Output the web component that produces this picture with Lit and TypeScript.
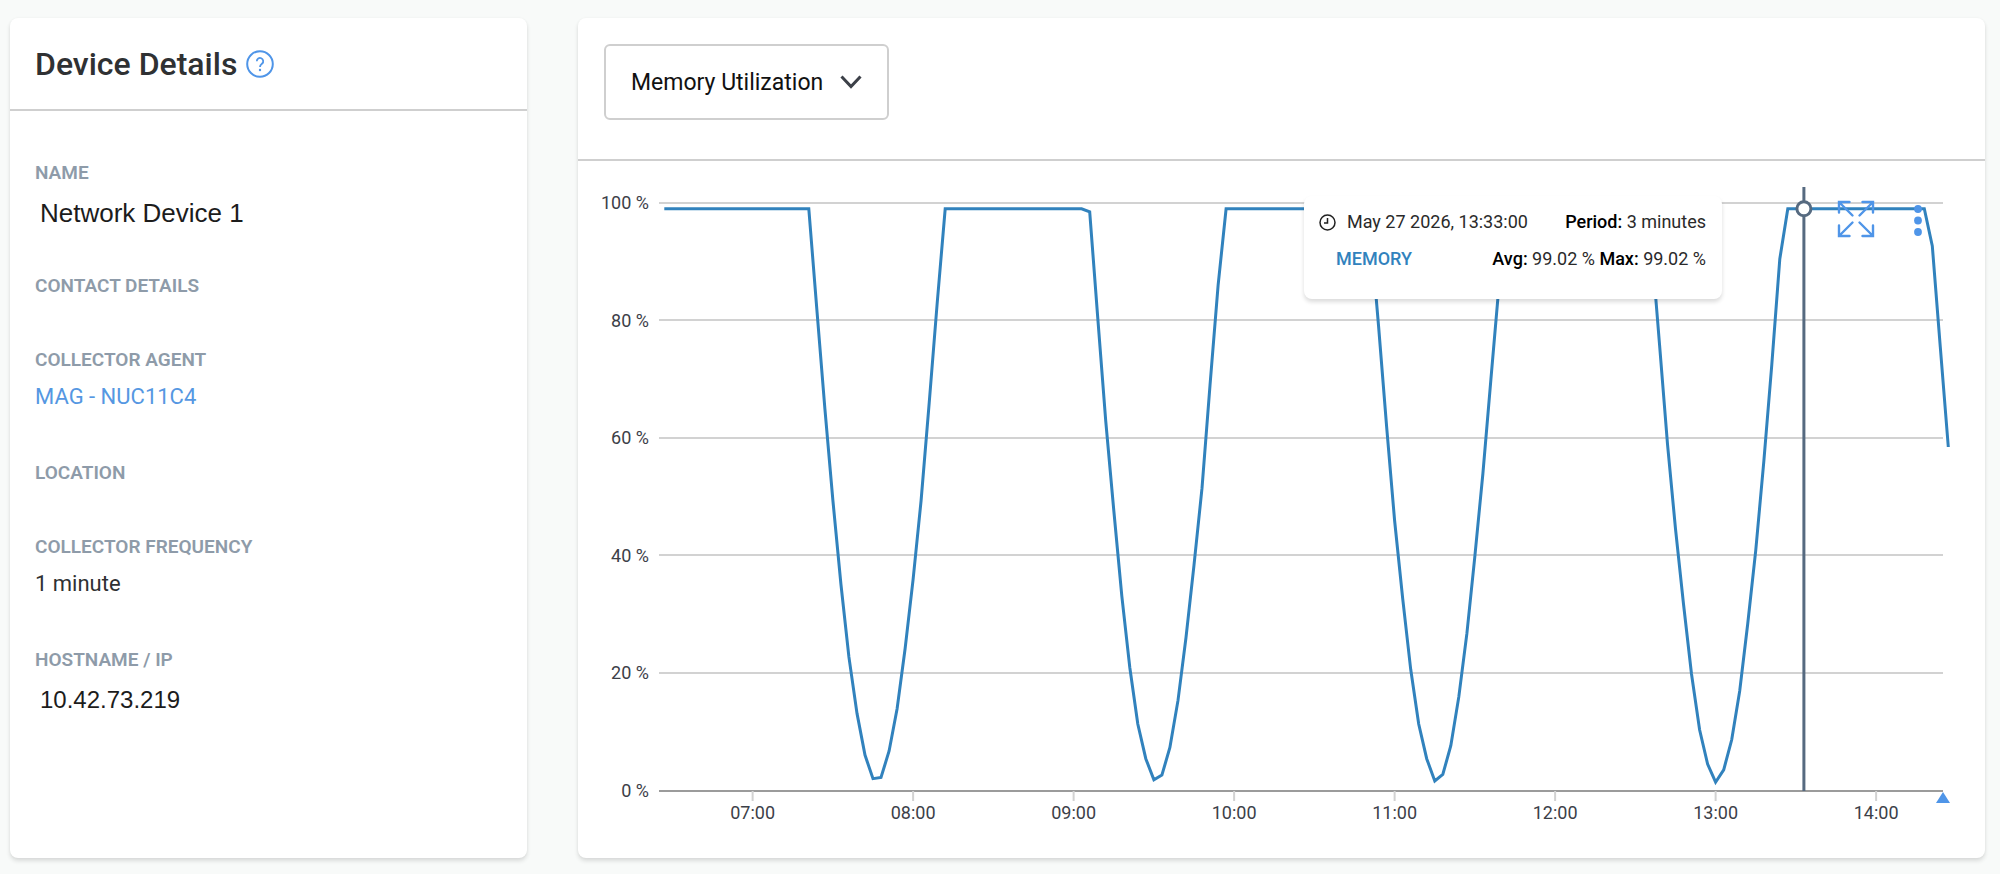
import { LitElement, html, css, svg, nothing } from "lit";
import { customElement, property, state } from "lit/decorators.js";

interface Field {
  label: string;
  value?: string;
  kind?: "text" | "link" | "name" | "address";
}

const FIELDS: Field[] = [
  { label: "NAME", value: "Network Device 1", kind: "name" },
  { label: "CONTACT DETAILS" },
  { label: "COLLECTOR AGENT", value: "MAG - NUC11C4", kind: "link" },
  { label: "LOCATION" },
  { label: "COLLECTOR FREQUENCY", value: "1 minute", kind: "text" },
  { label: "HOSTNAME / IP", value: "10.42.73.219", kind: "address" },
];

const FULL = 99.02;

/* Minutes since midnight paired with memory use in percent. */
const run = (from: number, values: number[]): [number, number][] =>
  values.map((v, i) => [from + i * 3, v]);

const SERIES: [number, number][] = [
  [387, FULL],
  ...run(441, [FULL, 82, 65, 49.4, 35.2, 22.8, 13.2, 6.1, 2.1, 2.3, 6.8, 14, 24.2, 36, 49.4, 66, 83, FULL]),
  ...run(543, [FULL, 98.5, 80.6, 63, 47.7, 33.2, 21, 11.4, 5.5, 1.9, 2.7, 7.4, 15.4, 26.1, 38.4, 51.5, 69, 86, FULL]),
  ...run(648, [FULL, 95, 79, 62, 46, 32.7, 20.7, 11.4, 5.5, 1.7, 2.8, 7.7, 16, 26.8, 40, 54, 70, 86, FULL]),
  ...run(753, [FULL, 93, 76, 59, 44.6, 31.8, 19.9, 10.4, 4.6, 1.5, 3.6, 8.7, 17, 28.4, 41, 56, 72.5, 90.5, FULL]),
  ...run(858, [FULL, 92.7, 75.5, 58.5]),
];

const START = 385;
const END = 865;
const HOVER = 813;
const PAD = { left: 81, right: 42, top: 42, bottom: 66 };
const HEIGHT = 696;

@customElement("usage-chart")
export class UsageChart extends LitElement {
  @property({ attribute: false }) series: [number, number][] = [];
  @state() private width = 1407;
  private observer?: ResizeObserver;

  static styles = css`
    :host { display: block; position: relative; min-width: 0; }
    svg { display: block; }
    .plot { width: 100%; height: 696px; }
    .plot text { font-size: 18px; fill: #3c4048; }
    .grid { stroke: #d2d2d2; stroke-width: 2; }
    .axis { stroke: #9b9b9b; stroke-width: 2; }
    .line { fill: none; stroke: #3182bd; stroke-width: 3; }
    .cursor { stroke: #566a80; stroke-width: 3; }
    .dot { fill: #fff; stroke: #566a80; stroke-width: 3; }
    .now { fill: #4f95e8; }
    .tools { position: absolute; top: 39px; right: 63px; display: flex; gap: 39px; }
    button { border: 0; padding: 0; background: none; cursor: pointer; }
    .tip {
      position: absolute; top: 35px; width: 418px; height: 103px; box-sizing: border-box;
      padding: 14px 16px 0 15px; background: #fff; border-radius: 8px;
      box-shadow: 0 3px 4px rgba(0, 0, 0, 0.14); font-size: 18px; color: #2a2a2a;
      display: flex; flex-direction: column; gap: 13px; white-space: nowrap;
    }
    .row { display: flex; align-items: center; line-height: 24px; }
    .row .end { margin-left: auto; }
    .clock { margin-right: 11px; }
    .metric { margin-left: 17px; color: #3182bd; font-weight: 500; }
    b { font-weight: 500; color: #000; }
  `;

  connectedCallback() {
    super.connectedCallback();
    this.observer = new ResizeObserver(([e]) => {
      this.width = Math.round(e.contentRect.width);
    });
    this.observer.observe(this);
  }

  disconnectedCallback() {
    this.observer?.disconnect();
    super.disconnectedCallback();
  }

  private x(m: number) {
    const span = this.width - PAD.left - PAD.right;
    return PAD.left + ((m - START) / (END - START)) * span;
  }

  private y(v: number) {
    return HEIGHT - PAD.bottom - (v / 100) * (HEIGHT - PAD.top - PAD.bottom);
  }

  render() {
    const right = this.width - PAD.right;
    const base = this.y(0);
    const cursor = this.x(HOVER);
    return html`
      <svg class="plot" role="img" aria-label="Memory utilization over time">
        ${[100, 80, 60, 40, 20, 0].map(
          (v) => svg`
            <line class=${v ? "grid" : "axis"} x1=${PAD.left} x2=${right} y1=${Math.floor(this.y(v))} y2=${Math.floor(this.y(v))}></line>
            <text x=${PAD.left - 10} y=${this.y(v) + 6} text-anchor="end">${v} %</text>`
        )}
        ${[7, 8, 9, 10, 11, 12, 13, 14].map(
          (h) => svg`
            <line class="grid" x1=${this.x(h * 60)} x2=${this.x(h * 60)} y1=${base} y2=${base + 10}></line>
            <text x=${this.x(h * 60)} y=${base + 28} text-anchor="middle">${String(h).padStart(2, "0")}:00</text>`
        )}
        <path class="now" d=${`M${right} ${base + 1}l7 11h-14z`}></path>
        <polyline class="line" points=${this.series.map(([m, v]) => `${this.x(m).toFixed(1)},${this.y(v).toFixed(1)}`).join(" ")}></polyline>
        <line class="cursor" x1=${cursor} x2=${cursor} y1="26" y2=${base}></line>
        <circle class="dot" cx=${cursor} cy=${this.y(FULL)} r="7"></circle>
      </svg>
      <div class="tools">
        <button aria-label="Expand chart">
          <svg width="38" height="38" viewBox="0 0 38 38" fill="none" stroke="#4f95e8" stroke-width="2.4" stroke-linecap="round">
            <path d="M2 12.500V2H12.500M2 2L15.500 15.500M25.500 2H36V12.500M36 2L22.500 15.500M2 25.500V36H12.500M2 36L15.500 22.500M25.500 36H36V25.500M36 36L22.500 22.500"></path>
          </svg>
        </button>
        <button aria-label="Chart menu">
          <svg width="8" height="38" viewBox="0 0 8 38" fill="#4f95e8">
            <circle cx="4" cy="9" r="3.900"></circle><circle cx="4" cy="20.500" r="3.900"></circle><circle cx="4" cy="32" r="3.900"></circle>
          </svg>
        </button>
      </div>
      <div class="tip" style=${`left:${Math.round(cursor) - 500}px`}>
        <div class="row">
          <svg class="clock" width="17" height="17" viewBox="0 0 17 17" fill="none" stroke="#222" stroke-width="1.5">
            <circle cx="8.5" cy="8.5" r="7.5"></circle><path d="M8.5 4v5H5"></path>
          </svg>
          <span>May 27 2026, 13:33:00</span>
          <span class="end"><b>Period:</b> 3 minutes</span>
        </div>
        <div class="row">
          <span class="metric">MEMORY</span>
          <span class="end"><b>Avg:</b> 99.02 % <b>Max:</b> 99.02 %</span>
        </div>
      </div>
    `;
  }
}

@customElement("app-root")
export class AppRoot extends LitElement {
  static styles = css`
    :host {
      display: grid; grid-template-columns: 517px minmax(0, 1fr); gap: 51px;
      box-sizing: border-box; min-height: 100vh; padding: 18px 15px 16px 10px;
      background: #f8faf9; font-family: Roboto, sans-serif; color: #2f3133;
    }
    .card {
      background: #fff; border-radius: 8px; min-width: 0;
      box-shadow: 0 3px 4px rgba(0, 0, 0, 0.12), 0 0 3px rgba(0, 0, 0, 0.04);
    }
    header { display: flex; align-items: center; box-sizing: border-box; padding: 0 25px; border-bottom: 2px solid #cfcfcf; }
    .title { height: 93px; gap: 9px; }
    h1 { margin: 0; font-size: 32px; font-weight: 500; line-height: 40px; }
    button { display: flex; border: 0; padding: 0; background: none; cursor: pointer; }
    dl { margin: 0; padding: 50px 25px; display: flex; flex-direction: column; gap: 50px; }
    dt { font-size: 19px; line-height: 24px; font-weight: 600; color: #8e9ba9; }
    dd { margin: 11px 0 0; font-size: 22px; line-height: 28px; }
    .name, .address { margin: 17px 0 0 5px; line-height: 22px; font-family: "Liberation Sans", Arial, sans-serif; color: #1c1c1c; }
    .name { font-size: 26px; }
    .address { font-size: 24px; }
    a { color: #5597e2; text-decoration: none; }
    .pick { height: 143px; align-items: flex-start; padding: 26px 26px 0; }
    .select { position: relative; display: flex; }
    select {
      appearance: none; height: 76px; padding: 0 63px 0 25px; border: 2px solid #cfcfcf; border-radius: 6px;
      background: #fff; color: #111; font-family: inherit; font-size: 23px;
    }
    .chevron { position: absolute; right: 27px; top: 31px; pointer-events: none; }
  `;

  private value(f: Field) {
    if (!f.value) return nothing;
    return html`<dd class=${f.kind ?? "text"}>${f.kind === "link" ? html`<a href="#agent">${f.value}</a>` : f.value}</dd>`;
  }

  render() {
    return html`
      <section class="card">
        <header class="title">
          <h1>Device Details</h1>
          <button aria-label="Help">
            <svg width="28" height="28" viewBox="0 0 28 28">
              <circle cx="14" cy="14" r="12.8" fill="none" stroke="#4f95e8" stroke-width="2"></circle>
              <path d="M10.8 11.2a3.2 3.2 0 1 1 5.4 2.3c-1.200 1.100-2.200 1.700-2.200 3.500" fill="none" stroke="#4f95e8" stroke-width="1.800"></path>
              <circle cx="14" cy="20" r="1.200" fill="#4f95e8"></circle>
            </svg>
          </button>
        </header>
        <dl>${FIELDS.map((f) => html`<div><dt>${f.label}</dt>${this.value(f)}</div>`)}</dl>
      </section>
      <section class="card">
        <header class="pick">
          <div class="select">
            <select aria-label="Metric">
              <option>Memory Utilization</option>
            </select>
            <svg class="chevron" width="22" height="14" viewBox="0 0 22 14" fill="none" stroke="#3c4048" stroke-width="3">
              <path d="M1.500 1.500L11 11.500L20.500 1.500"></path>
            </svg>
          </div>
        </header>
        <usage-chart .series=${SERIES}></usage-chart>
      </section>
    `;
  }
}
